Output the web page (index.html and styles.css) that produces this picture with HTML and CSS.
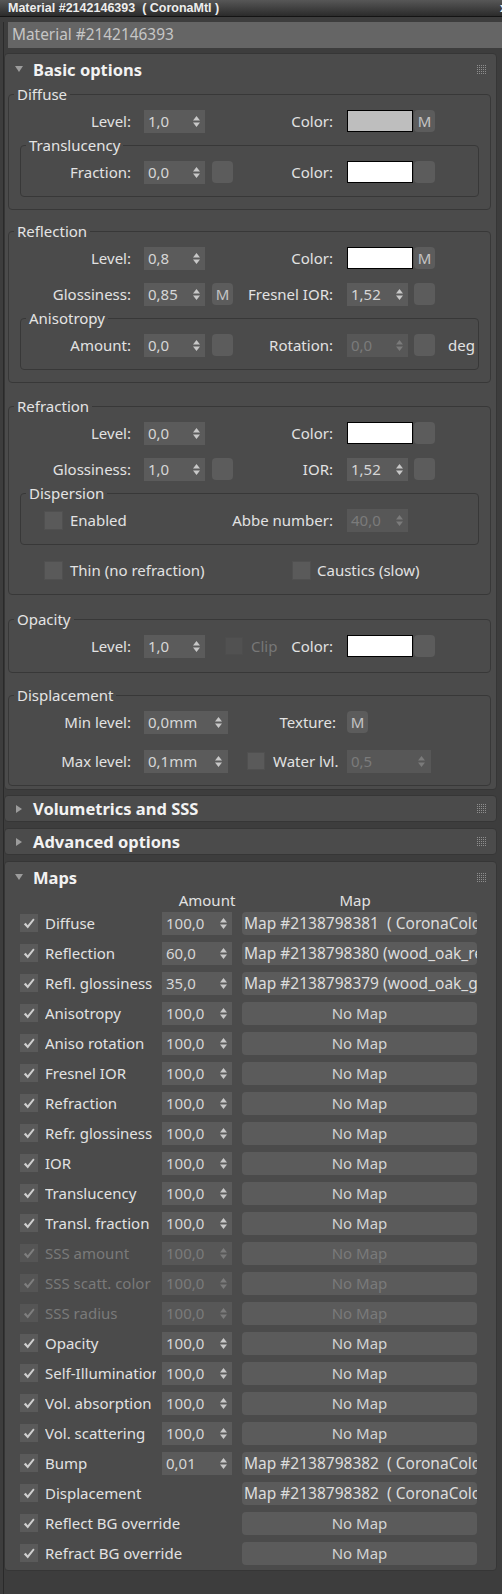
FILE: index.html
```html
<!DOCTYPE html>
<html>
<head>
<meta charset="utf-8">
<title>CoronaMtl</title>
<link rel="stylesheet" href="styles.css">
</head>
<body>
<div class="titlebar"><span class="ttl">Material #2142146393  ( CoronaMtl )</span><span class="tx">x</span></div>
<div class="panel">
  <div class="namefield">Material #2142146393</div>

  <section class="rollout">
    <div class="rhead"><svg class="tri" width="8" height="6" viewBox="0 0 8 6"><path d="M0 0H8L4 6Z"/></svg><span class="rtitle">Basic options</span><i class="grip"></i></div>
    <div class="rbody">
      <fieldset class="grp">
        <legend>Diffuse</legend>
        <div class="row">
          <span class="lbl">Level:</span>
          <span class="spin"><span class="val">1,0</span><svg class="arr" viewBox="0 0 7 13"><path d="M0 5.5L3.5 1L7 5.5ZM0 7.5L3.5 12L7 7.5Z"/></svg></span>
          <span class="btn ghost"></span>
          <span class="rlbl">Color:</span>
          <span class="swatch gray"></span>
          <span class="btn">M</span>
        </div>
        <fieldset class="grp inner">
          <legend>Translucency</legend>
          <div class="row">
            <span class="lbl">Fraction:</span>
            <span class="spin"><span class="val">0,0</span><svg class="arr" viewBox="0 0 7 13"><path d="M0 5.5L3.5 1L7 5.5ZM0 7.5L3.5 12L7 7.5Z"/></svg></span>
            <span class="btn"></span>
            <span class="rlbl">Color:</span>
            <span class="swatch"></span>
            <span class="btn"></span>
          </div>
        </fieldset>
      </fieldset>

      <fieldset class="grp">
        <legend>Reflection</legend>
        <div class="row">
          <span class="lbl">Level:</span>
          <span class="spin"><span class="val">0,8</span><svg class="arr" viewBox="0 0 7 13"><path d="M0 5.5L3.5 1L7 5.5ZM0 7.5L3.5 12L7 7.5Z"/></svg></span>
          <span class="btn ghost"></span>
          <span class="rlbl">Color:</span>
          <span class="swatch"></span>
          <span class="btn">M</span>
        </div>
        <div class="row">
          <span class="lbl">Glossiness:</span>
          <span class="spin"><span class="val">0,85</span><svg class="arr" viewBox="0 0 7 13"><path d="M0 5.5L3.5 1L7 5.5ZM0 7.5L3.5 12L7 7.5Z"/></svg></span>
          <span class="btn">M</span>
          <span class="rlbl">Fresnel IOR:</span>
          <span class="spin"><span class="val">1,52</span><svg class="arr" viewBox="0 0 7 13"><path d="M0 5.5L3.5 1L7 5.5ZM0 7.5L3.5 12L7 7.5Z"/></svg></span>
          <span class="btn"></span>
        </div>
        <fieldset class="grp inner">
          <legend>Anisotropy</legend>
          <div class="row">
            <span class="lbl">Amount:</span>
            <span class="spin"><span class="val">0,0</span><svg class="arr" viewBox="0 0 7 13"><path d="M0 5.5L3.5 1L7 5.5ZM0 7.5L3.5 12L7 7.5Z"/></svg></span>
            <span class="btn"></span>
            <span class="rlbl">Rotation:</span>
            <span class="spin dis"><span class="val">0,0</span><svg class="arr" viewBox="0 0 7 13"><path d="M0 5.5L3.5 1L7 5.5ZM0 7.5L3.5 12L7 7.5Z"/></svg></span>
            <span class="btn"></span>
            <span class="deg">deg</span>
          </div>
        </fieldset>
      </fieldset>

      <fieldset class="grp g-refr">
        <legend>Refraction</legend>
        <div class="row">
          <span class="lbl">Level:</span>
          <span class="spin"><span class="val">0,0</span><svg class="arr" viewBox="0 0 7 13"><path d="M0 5.5L3.5 1L7 5.5ZM0 7.5L3.5 12L7 7.5Z"/></svg></span>
          <span class="btn ghost"></span>
          <span class="rlbl">Color:</span>
          <span class="swatch"></span>
          <span class="btn"></span>
        </div>
        <div class="row">
          <span class="lbl">Glossiness:</span>
          <span class="spin"><span class="val">1,0</span><svg class="arr" viewBox="0 0 7 13"><path d="M0 5.5L3.5 1L7 5.5ZM0 7.5L3.5 12L7 7.5Z"/></svg></span>
          <span class="btn"></span>
          <span class="rlbl">IOR:</span>
          <span class="spin"><span class="val">1,52</span><svg class="arr" viewBox="0 0 7 13"><path d="M0 5.5L3.5 1L7 5.5ZM0 7.5L3.5 12L7 7.5Z"/></svg></span>
          <span class="btn"></span>
        </div>
        <fieldset class="grp inner">
          <legend>Dispersion</legend>
          <div class="row">
            <span class="lpart"><span class="cb"></span><span class="cbt">Enabled</span></span>
            <span class="rlbl">Abbe number:</span>
            <span class="spin dis"><span class="val">40,0</span><svg class="arr" viewBox="0 0 7 13"><path d="M0 5.5L3.5 1L7 5.5ZM0 7.5L3.5 12L7 7.5Z"/></svg></span>
          </div>
        </fieldset>
        <div class="row thin">
          <span class="lpart"><span class="cb"></span><span class="cbt">Thin (no refraction)</span></span>
          <span class="caus"><span class="cb"></span><span class="cbt2">Caustics (slow)</span></span>
        </div>
      </fieldset>

      <fieldset class="grp g-opac">
        <legend>Opacity</legend>
        <div class="row">
          <span class="lbl">Level:</span>
          <span class="spin"><span class="val">1,0</span><svg class="arr" viewBox="0 0 7 13"><path d="M0 5.5L3.5 1L7 5.5ZM0 7.5L3.5 12L7 7.5Z"/></svg></span>
          <span class="clippart"><span class="cb cbdis"></span><span class="clip">Clip</span><span class="clipcolor">Color:</span></span>
          <span class="swatch"></span>
          <span class="btn"></span>
        </div>
      </fieldset>

      <fieldset class="grp g-disp">
        <legend>Displacement</legend>
        <div class="row drow">
          <span class="lbl">Min level:</span>
          <span class="spin w"><span class="val">0,0mm</span><svg class="arr" viewBox="0 0 7 13"><path d="M0 5.5L3.5 1L7 5.5ZM0 7.5L3.5 12L7 7.5Z"/></svg></span>
          <span class="tlbl">Texture:</span>
          <span class="btn tbtn">M</span>
        </div>
        <div class="row drow">
          <span class="lbl">Max level:</span>
          <span class="spin w"><span class="val">0,1mm</span><svg class="arr" viewBox="0 0 7 13"><path d="M0 5.5L3.5 1L7 5.5ZM0 7.5L3.5 12L7 7.5Z"/></svg></span>
          <span class="wpart"><span class="cb"></span><span class="cbt3">Water lvl.</span></span>
          <span class="spin w dis"><span class="val">0,5</span><svg class="arr" viewBox="0 0 7 13"><path d="M0 5.5L3.5 1L7 5.5ZM0 7.5L3.5 12L7 7.5Z"/></svg></span>
        </div>
      </fieldset>
    </div>
  </section>

  <section class="rollout closed first-closed">
    <div class="rhead"><svg class="tri" width="6" height="8" viewBox="0 0 6 8"><path d="M0 0L6 4L0 8Z"/></svg><span class="rtitle">Volumetrics and SSS</span><i class="grip"></i></div>
  </section>

  <section class="rollout closed">
    <div class="rhead"><svg class="tri" width="6" height="8" viewBox="0 0 6 8"><path d="M0 0L6 4L0 8Z"/></svg><span class="rtitle">Advanced options</span><i class="grip"></i></div>
  </section>

  <section class="rollout maps">
    <div class="rhead"><svg class="tri" width="8" height="6" viewBox="0 0 8 6"><path d="M0 0H8L4 6Z"/></svg><span class="rtitle">Maps</span><i class="grip"></i></div>
    <div class="mbody">
      <div class="mhead"><span class="h1">Amount</span><span class="h2">Map</span></div>
      <div class="mlist" id="mlist"></div>
    </div>
  </section>
</div>
<script src="app.js"></script>
</body>
</html>
```

FILE: app.js
```js
const rows = [
  ["Diffuse", "100,0", "Map #2138798381  ( CoronaColor )"],
  ["Reflection", "60,0", "Map #2138798380 (wood_oak_refl.jpg)"],
  ["Refl. glossiness", "35,0", "Map #2138798379 (wood_oak_gloss.jpg)"],
  ["Anisotropy", "100,0", null],
  ["Aniso rotation", "100,0", null],
  ["Fresnel IOR", "100,0", null],
  ["Refraction", "100,0", null],
  ["Refr. glossiness", "100,0", null],
  ["IOR", "100,0", null],
  ["Translucency", "100,0", null],
  ["Transl. fraction", "100,0", null],
  ["SSS amount", "100,0", null, true],
  ["SSS scatt. color", "100,0", null, true],
  ["SSS radius", "100,0", null, true],
  ["Opacity", "100,0", null],
  ["Self-Illumination", "100,0", null],
  ["Vol. absorption", "100,0", null],
  ["Vol. scattering", "100,0", null],
  ["Bump", "0,01", "Map #2138798382  ( CoronaColor )"],
  ["Displacement", null, "Map #2138798382  ( CoronaColor )"],
  ["Reflect BG override", null, null],
  ["Refract BG override", null, null]
];
const check = '<svg class="chk" viewBox="0 0 12 11"><path d="M0.8 6.2L2.8 4.8L4.6 7.3L10.2 0.6L11.6 1.8L4.8 10.4Z"/></svg>';
const arr = '<svg class="arr" viewBox="0 0 7 13"><path d="M0 5.5L3.5 1L7 5.5ZM0 7.5L3.5 12L7 7.5Z"/></svg>';
const list = document.getElementById("mlist");
list.innerHTML = rows.map(([name, amt, map, dis]) => {
  const spin = amt === null
    ? '<span class="spin mspin none"></span>'
    : `<span class="spin mspin${dis ? " dis" : ""}"><span class="val">${amt}</span>${arr}</span>`;
  const mapEl = map
    ? `<span class="map">${map}</span>`
    : `<span class="map nomap">No Map</span>`;
  return `<div class="mrow${dis ? " dis" : ""}"><span class="cb mcb">${check}</span><span class="mlbl${amt === null ? " wide" : ""}">${name}</span>${spin}${mapEl}</div>`;
}).join("");
```

FILE: styles.css
```css
* { box-sizing: border-box; }
html, body { margin: 0; padding: 0; }
body {
  width: 502px;
  height: 1594px;
  overflow: hidden;
  background: #3d3d3d;
  font-family: "Noto Sans", "Open Sans", sans-serif;
  font-size: 15px;
  color: #e2e2e2;
}
.titlebar {
  height: 17px;
  background: linear-gradient(#575757, #2b2b2b);
  border-bottom: 1px solid #141414;
  display: flex;
  align-items: center;
  justify-content: space-between;
  padding-left: 8px;
  overflow: hidden;
  font: bold 12.5px/16px "Liberation Sans", Arial, sans-serif;
  color: #ededed;
  white-space: pre;
}
.tx { margin-right: -5px; }
.panel {
  margin-left: 3px;
  border-left: 1px solid #2a2a2a;
  height: 1577px;
}
.namefield {
  margin: 5px 0 0 4px;
  height: 26px;
  background: #656565;
  color: #c6c6c6;
  font-size: 15.4px;
  line-height: 26px;
  padding-left: 4px;
  white-space: nowrap;
}
.rollout {
  background: #4b4b4b;
  border: 1px solid #363636;
  border-radius: 4px;
  margin: 5px 5px 0 0;
}
.rollout.closed { margin-top: 6px; }
.rollout.first-closed { margin-top: 5px; }
.rollout.maps { margin-top: 6px; }
.rhead {
  height: 30px;
  display: flex;
  align-items: center;
}
.closed .rhead { height: 25px; }
.tri { margin-left: 10px; fill: #9c9c9c; flex: none; }
.closed .tri { margin-left: 11px; }
.rtitle { margin-left: 10px; font-weight: bold; font-size: 16.5px; color: #f2f2f2; white-space: nowrap; }
.closed .rtitle { margin-left: 11px; }
.grip {
  margin-left: auto;
  margin-right: 10px;
  width: 9px;
  height: 9px;
  flex: none;
  background:
    linear-gradient(90deg, transparent 1px, #4b4b4b 1px) 0 0 / 2px 2px,
    linear-gradient(transparent 1px, #4b4b4b 1px) 0 0 / 2px 2px,
    #8e8e8e;
}
.rbody { padding: 0 0 3px 0; }

fieldset.grp {
  margin: 11px 5px 0 3px;
  padding: 5px 0 12px;
  border: 1px solid #383838;
  border-radius: 4px;
  min-width: 0;
}
.rbody > fieldset.grp:first-child { margin-top: 0; }
fieldset.g-refr { margin-top: 13px; }
fieldset.g-opac { margin-top: 14px; padding-bottom: 14px; }
fieldset.g-disp { margin-top: 12px; }
fieldset.inner { margin: 2px 11px 0 11px; }
legend {
  padding: 0 3px;
  margin-left: 5px;
  line-height: 20px;
  height: 20px;
  color: #e4e4e4;
}

.row {
  --lw: 122px;
  display: flex;
  align-items: center;
  height: 24px;
  margin-top: 12px;
}
legend + .row { margin-top: 0; }
.inner .row { --lw: 110px; }
.row.thin { margin-top: 13px; }
.drow { margin-top: 15px; }
legend + .drow { margin-top: 0; }

.lbl {
  width: var(--lw);
  margin-right: 13px;
  display: flex;
  justify-content: flex-end;
  white-space: nowrap;
  flex: none;
}
.rlbl {
  width: 100px;
  margin-right: 14px;
  display: flex;
  justify-content: flex-end;
  white-space: nowrap;
  flex: none;
}
.spin {
  width: 61px;
  height: 23px;
  background: #5b5b5b;
  display: flex;
  align-items: center;
  padding: 0 5px 0 4px;
  color: #d6d6d6;
  flex: none;
}
.spin .val { flex: 1; white-space: nowrap; }
.arr { width: 7px; height: 13px; fill: #c8c8c8; flex: none; }
.spin.dis { color: #7b7b7b; background: #575757; }
.spin.dis .arr { fill: #7b7b7b; }
.spin.w { width: 84px; padding-right: 6px; }

.btn {
  width: 21px;
  height: 22px;
  border-radius: 4px;
  background: #5c5c5c;
  color: #c4c4c4;
  display: flex;
  align-items: center;
  justify-content: center;
  margin-left: 7px;
  flex: none;
}
.ghost { visibility: hidden; }
.swatch {
  width: 66px;
  height: 22px;
  background: #ffffff;
  border: 1px solid #000000;
  flex: none;
}
.swatch.gray { background: #bebebe; }
.swatch + .btn { margin-left: 1px; }
.rlbl + .spin + .btn { margin-left: 6px; }
.deg { margin-left: 13px; }

.cb {
  width: 19px;
  height: 19px;
  background: #5a5a5a;
  border: 1px solid #505050;
  flex: none;
  display: flex;
  align-items: center;
  justify-content: center;
}
.cbdis { background: #515151; border-color: #4d4d4d; width: 18px; height: 18px; }
.lpart {
  width: calc(var(--lw) + 102px);
  padding-left: calc(var(--lw) - 87px);
  display: flex;
  align-items: center;
  flex: none;
  white-space: nowrap;
}
.cbt { margin-left: 7px; }
.caus { display: flex; align-items: center; margin-left: 59px; white-space: nowrap; }
.cbt2 { margin-left: 6px; }

.clippart {
  width: 128px;
  display: flex;
  align-items: center;
  margin-right: 14px;
  flex: none;
}
.clippart .cb { margin-left: 20px; }
.clip { margin-left: 8px; color: #777777; }
.clipcolor { margin-left: auto; }

.tlbl {
  width: 108px;
  display: flex;
  justify-content: flex-end;
  white-space: nowrap;
  flex: none;
}
.tbtn { margin-left: 11px; }
.wpart {
  width: 119px;
  display: flex;
  align-items: center;
  flex: none;
  white-space: nowrap;
}
.wpart .cb { margin-left: 19px; width: 18px; height: 18px; }
.cbt3 { margin-left: 8px; }

/* Maps */
.mbody { padding-bottom: 2px; }
.mhead {
  display: flex;
  height: 16px;
  line-height: 16px;
  padding-left: 157px;
}
.h1 { width: 90px; text-align: center; }
.h2 { width: 206px; text-align: center; }
.mrow {
  display: flex;
  align-items: center;
  height: 30px;
  padding-left: 15px;
}
.mcb {
  width: 18px;
  height: 18px;
  margin-right: 7px;
  border: none;
}
.chk { width: 12px; height: 11px; fill: #cfcfcf; }
.mlbl {
  width: 111px;
  overflow: hidden;
  white-space: nowrap;
  flex: none;
}
.mlbl.wide { overflow: visible; }
.mspin { width: 70px; margin-left: 6px; }
.mspin.none { visibility: hidden; }
.map {
  margin-left: 10px;
  width: 235px;
  height: 23px;
  border-radius: 4px;
  background: #5b5b5b;
  font-size: 15.5px;
  line-height: 23px;
  padding-left: 2px;
  white-space: pre;
  overflow: hidden;
  color: #dddddd;
  flex: none;
}
.nomap { text-align: center; padding-left: 0; color: #d4d4d4; font-size: 15px; }
.mrow.dis .mlbl, .mrow.dis .nomap { color: #7a7a7a; }
.mrow.dis .mcb { background: #555555; }
.mrow.dis .chk { fill: #7e7e7e; }
```
